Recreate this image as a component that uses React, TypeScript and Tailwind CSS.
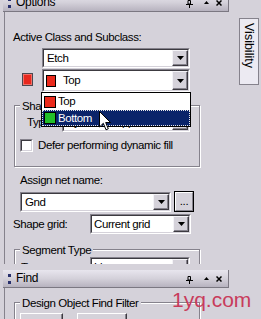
import React from "react";

const Tri = () => (
  <svg width="7" height="4" viewBox="0 0 7 4">
    <path d="M0 0H7L3.5 4Z" fill="#000" />
  </svg>
);

function DropBtn({ tall }: { tall?: boolean }) {
  return (
    <div
      className={`${tall ? "h-[19px]" : "h-[16px]"} w-[16px] shrink-0 flex items-center justify-center bg-[#d5d2da] border border-t-[#f4f3f7] border-l-[#f4f3f7] border-b-[#3c3a40] border-r-[#3c3a40] shadow-[inset_-1px_-1px_0_#85828c]`}
    >
      <Tri />
    </div>
  );
}

function Combo({
  className,
  tall,
  children,
}: {
  className: string;
  tall?: boolean;
  children?: React.ReactNode;
}) {
  return (
    <div
      className={`${className} flex border border-t-[#85828c] border-l-[#85828c] border-b-white border-r-white`}
    >
      <div className="flex-1 min-w-0 flex items-center bg-white border border-t-[#3c3a40] border-l-[#3c3a40] border-b-[#d5d2da] border-r-[#d5d2da]">
        <div className="flex-1 min-w-0 flex items-center pl-[2px] overflow-hidden whitespace-nowrap">
          {children}
        </div>
        <DropBtn tall={tall} />
      </div>
    </div>
  );
}

function Group({
  label,
  className,
  children,
}: {
  label: string;
  className: string;
  children?: React.ReactNode;
}) {
  return (
    <div
      className={`${className} border border-[#85828c] shadow-[inset_1px_1px_0_#fff,1px_1px_0_#fff]`}
    >
      <div className="-mt-[6px] ml-[5px] px-[2px] w-fit bg-[#d5d2da] leading-[13px] whitespace-nowrap">
        {label}
      </div>
      {children}
    </div>
  );
}

function TitleBar({ title }: { title: string }) {
  return (
    <div className="w-[226px] h-[18px] flex items-center bg-gradient-to-b from-[#e8e6ee] via-[#d4d1da] to-[#b7b3bf] border-b border-r border-[#7b7882]">
      <div className="ml-[5px] flex flex-col gap-[4px]">
        <div className="w-[3px] h-[3px] bg-[#28306c]" />
        <div className="w-[3px] h-[3px] bg-[#28306c]" />
      </div>
      <span className="ml-[5px] text-[12px] tracking-[-0.3px]">{title}</span>
      <div className="flex-1" />
      <svg width="7" height="8" viewBox="0 0 7 8" className="mt-[2px]">
        <path d="M2 0.5H4.5V4H2Z" fill="none" stroke="#000" />
        <path d="M0 4.5H7M3.5 4.5V8" stroke="#000" />
      </svg>
      <svg width="5" height="3" viewBox="0 0 5 3" className="ml-[11px]">
        <path d="M0 3H5L2.5 0Z" fill="#000" />
      </svg>
      <svg width="6" height="6" viewBox="0 0 6 6" className="ml-[7px] mr-[6px]">
        <path d="M0.5 0.5L5.5 5.5M5.5 0.5L0.5 5.5" stroke="#000" strokeWidth="1.5" />
      </svg>
    </div>
  );
}

function Btn({ className, children }: { className: string; children: React.ReactNode }) {
  return (
    <div
      className={`${className} h-[23px] flex justify-center pt-[4px] bg-[#d5d2da] border border-t-white border-l-white border-b-[#3c3a40] border-r-[#3c3a40] shadow-[inset_-1px_-1px_0_#85828c]`}
    >
      {children}
    </div>
  );
}

export default function App() {
  return (
    <div className="relative w-[261px] h-[319px] overflow-hidden bg-[#d5d2da] font-['Liberation_Sans',Arial,sans-serif] text-[11.5px] tracking-[-0.4px] leading-[13px] text-black">
      {/* Options panel */}
      <div className="flex h-[264px]">
        <div className="w-[229px] flex flex-col">
          <div className="pl-[3px] -mt-[6px]">
            <TitleBar title="Options" />
          </div>
          <div className="ml-[4px] flex-1 min-h-0 overflow-hidden border-l border-[#85828c] flex flex-col">
            <div className="mt-[19px] ml-[8px]">Active Class and Subclass:</div>
            <Combo className="mt-[4px] ml-[37px] w-[148px] h-[20px]">
              <span className="pl-[1px]">Etch</span>
            </Combo>
            <div className="mt-[1px] flex items-start">
              <div className="ml-[17px] mt-[4px] w-[11px] h-[13px] border border-[#4a4850] bg-[#e8281e] shadow-[inset_0_0_0_1px_#f07068]" />
              <Combo className="ml-[9px] w-[148px] h-[23px]" tall>
                <div className="w-[10px] h-[12px] border border-black bg-[#ea2a1c]" />
                <span className="ml-[7px]">Top</span>
              </Combo>
            </div>

            <Group label="Shape" className="mt-[13px] ml-[9px] w-[186px] pb-[14px]">
              <div className="-mt-[1px] flex items-center">
                <span className="ml-[12px] w-[35px]">Type:</span>
                <Combo className="w-[128px] h-[20px]">
                  <span>Dynamic copper</span>
                </Combo>
              </div>
              <div className="mt-[7px] flex items-center">
                <div className="ml-[5px] w-[13px] h-[13px] flex border border-t-[#85828c] border-l-[#85828c] border-b-white border-r-white">
                  <div className="flex-1 bg-white border border-t-[#3c3a40] border-l-[#3c3a40] border-b-[#d5d2da] border-r-[#d5d2da]" />
                </div>
                <span className="ml-[5px]">Defer performing dynamic fill</span>
              </div>
            </Group>

            <div className="mt-[7px] ml-[15px]">Assign net name:</div>
            <div className="mt-[5px] flex items-start">
              <Combo className="ml-[15px] w-[151px] h-[20px]">
                <span className="pl-[1px]">Gnd</span>
              </Combo>
              <div className="ml-[3px] -mt-[1px] w-[20px] h-[21px] flex border border-black">
                <div className="flex-1 flex justify-center bg-[#d5d2da] border border-t-white border-l-white border-b-[#85828c] border-r-[#85828c] leading-[13px] pt-[2px]">
                  ...
                </div>
              </div>
            </div>
            <div className="mt-[2px] flex items-center">
              <span className="ml-[8px] w-[77px]">Shape grid:</span>
              <Combo className="w-[101px] h-[20px]">
                <span>Current grid</span>
              </Combo>
            </div>

            <Group label="Segment Type" className="mt-[15px] ml-[9px] w-[186px] pb-[10px]">
              <div className="flex items-center">
                <span className="ml-[6px] w-[69px]">Type:</span>
                <Combo className="w-[100px] h-[20px]">
                  <span>Line</span>
                </Combo>
              </div>
            </Group>
          </div>
        </div>
        <div className="flex-1 pt-[18px] pl-[10px]">
          <div className="w-[20px] h-[67px] bg-[#eceaf2] border border-[#85828c] flex justify-center pt-[4px]">
            <span className="[writing-mode:vertical-rl] text-[12.5px] tracking-[0px] leading-[18px]">
              Visibility
            </span>
          </div>
        </div>
      </div>

      {/* Find panel */}
      <div className="h-[6px]" />
      <div className="pl-[3px]">
        <TitleBar title="Find" />
      </div>
      <div className="ml-[4px] h-[31px] overflow-hidden border-l border-[#85828c] flex flex-col">
        <Group label="Design Object Find Filter" className="mt-[14px] ml-[9px] w-[186px] shrink-0">
          <div className="mt-[3px] flex">
            <Btn className="ml-[5px] w-[43px]">All On</Btn>
            <Btn className="ml-[14px] w-[50px]">All Off</Btn>
          </div>
        </Group>
      </div>

      {/* Open dropdown list */}
      <div className="absolute left-[41px] top-[92px] w-[150px] h-[35px] bg-white border border-black flex flex-col">
        <div className="h-[17px] flex items-center pl-[2px]">
          <div className="w-[12px] h-[12px] border border-black bg-[#ea2a1c]" />
          <span className="ml-[2px]">Top</span>
        </div>
        <div className="h-[16px] flex items-center pl-[1px] bg-[#0a246a] text-white border border-dotted border-[#e8e8e8]">
          <div className="w-[12px] h-[12px] border border-black bg-[#22c02a]" />
          <span className="ml-[2px]">Bottom</span>
        </div>
      </div>

      {/* Mouse cursor */}
      <svg
        className="absolute left-[99px] top-[111px]"
        width="12"
        height="20"
        viewBox="0 0 12 20"
      >
        <path
          d="M0.5 0.5V16L4.3 12.3L7 18.8L9.3 17.8L6.7 11.5H11.5Z"
          fill="#fff"
          stroke="#000"
          strokeWidth="1"
          strokeLinejoin="miter"
        />
      </svg>

      {/* Watermark */}
      <div className="absolute left-[172px] top-[289px] text-[21px] leading-none tracking-[0px] text-[#c83c5c]">
        1yq.com
      </div>
    </div>
  );
}
